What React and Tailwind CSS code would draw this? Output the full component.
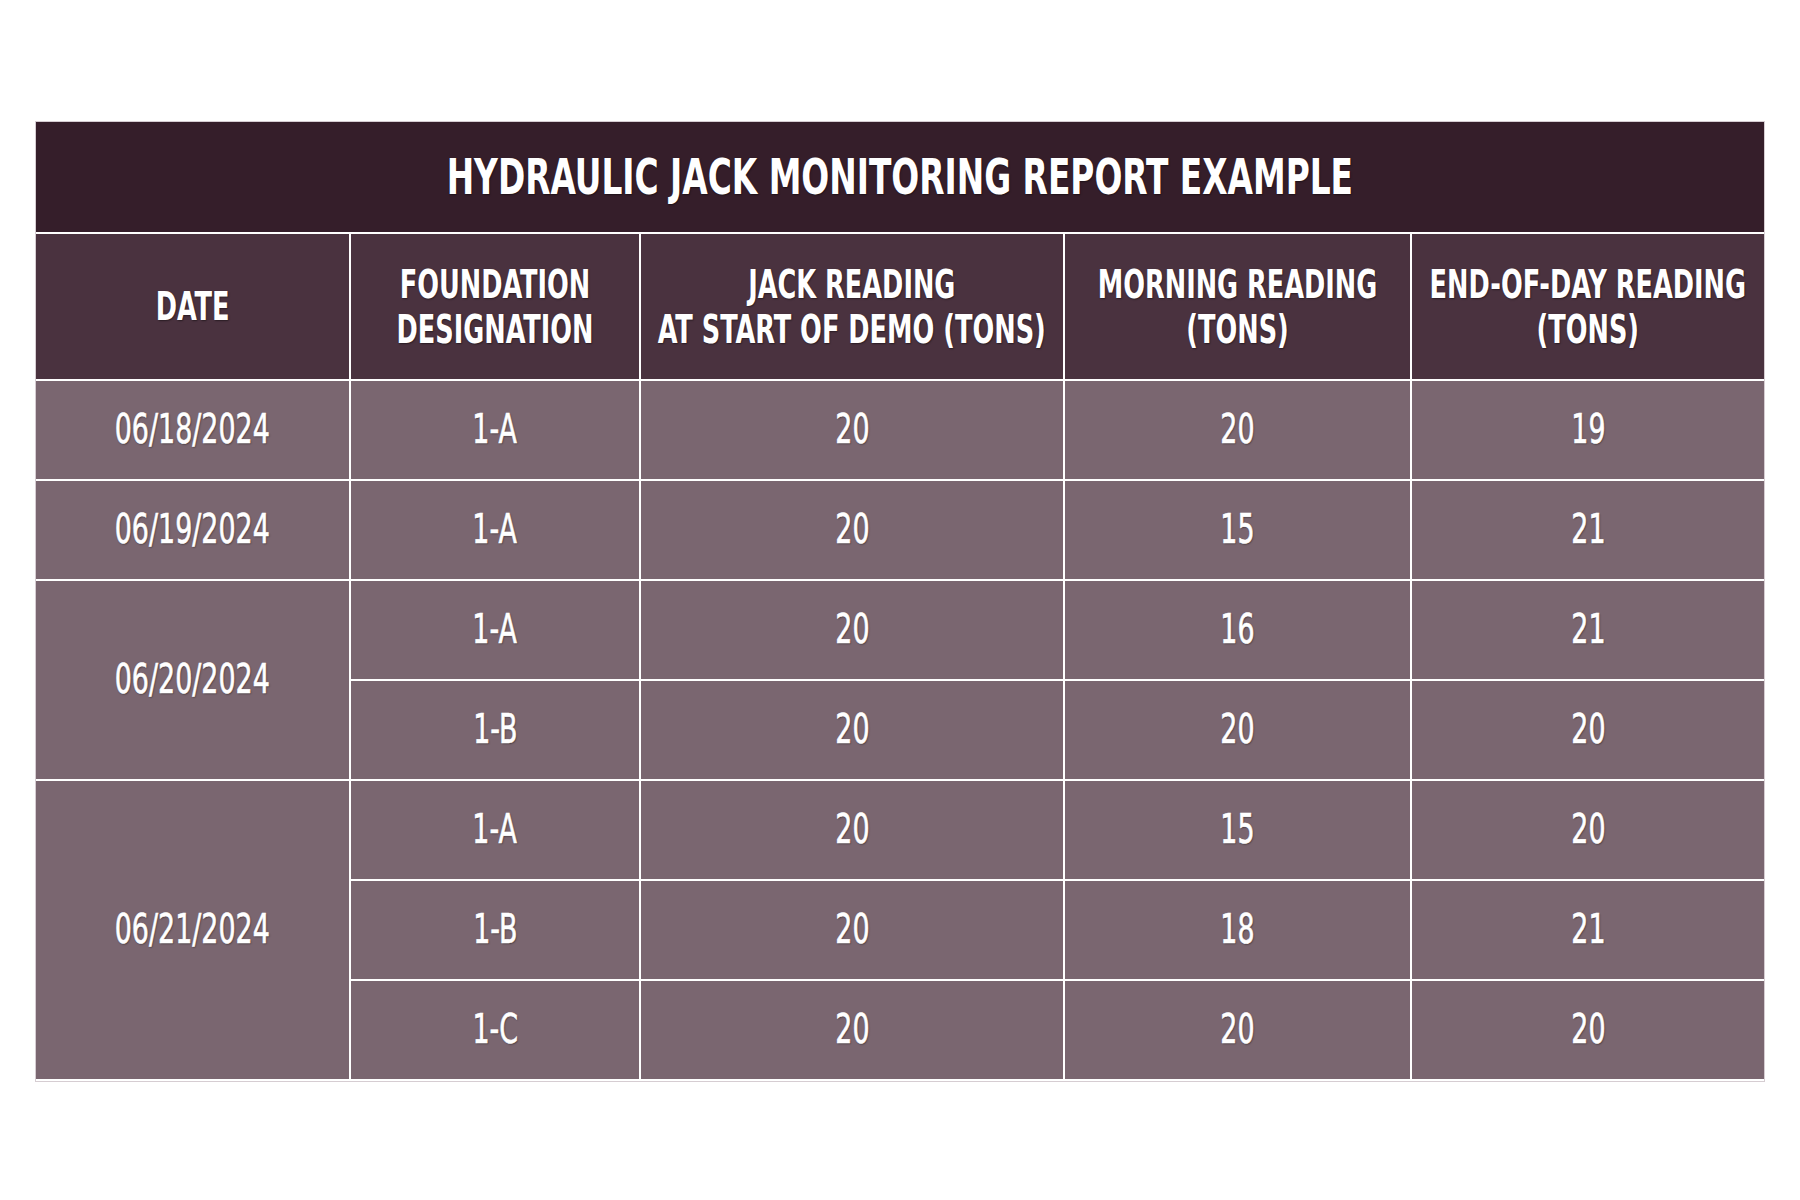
import React from "react";

const font = "font-['Liberation_Sans_Narrow','DejaVu_Sans_Condensed','Roboto',sans-serif]";

const rows = [
  { date: "06/18/2024", span: 1, items: [["1-A", "20", "20", "19"]] },
  { date: "06/19/2024", span: 1, items: [["1-A", "20", "15", "21"]] },
  {
    date: "06/20/2024",
    span: 2,
    items: [
      ["1-A", "20", "16", "21"],
      ["1-B", "20", "20", "20"],
    ],
  },
  {
    date: "06/21/2024",
    span: 3,
    items: [
      ["1-A", "20", "15", "20"],
      ["1-B", "20", "18", "21"],
      ["1-C", "20", "20", "20"],
    ],
  },
];

// condensed look: squeeze the text, keep it centred even when it is wider than the cell
const Txt = ({ children }) => (
  <div className="flex justify-center">
    <span className="inline-block shrink-0 whitespace-nowrap scale-x-[0.73] [text-shadow:1px_1px_2px_rgba(0,0,0,0.45)]">
      {children}
    </span>
  </div>
);

const App = () => {
  return (
    <div className={`w-[1800px] h-[1200px] bg-white pt-[122px] pl-[36px] ${font}`}>
      <table className="table-fixed border-collapse w-[1728px] text-white font-bold text-center outline outline-1 outline-[#d6cdd2]">
        <colgroup>
          <col className="w-[314px]" />
          <col className="w-[290px]" />
          <col className="w-[424px]" />
          <col className="w-[347px]" />
          <col className="w-[353px]" />
        </colgroup>
        <thead>
          <tr className="h-[111px] bg-[#351e2a]">
            <th colSpan={5} className="border-b-2 border-white text-[50px] font-bold">
              <Txt>HYDRAULIC JACK MONITORING REPORT EXAMPLE</Txt>
            </th>
          </tr>
          <tr className="h-[147px] bg-[#4a323f] text-[39px] leading-[45px]">
            <th className="border-2 border-l-0 border-white font-bold">
              <Txt>DATE</Txt>
            </th>
            <th className="border-2 border-white font-bold">
              <Txt>
                FOUNDATION
                <br />
                DESIGNATION
              </Txt>
            </th>
            <th className="border-2 border-white font-bold">
              <Txt>
                JACK READING
                <br />
                AT START OF DEMO (TONS)
              </Txt>
            </th>
            <th className="border-2 border-white font-bold">
              <Txt>
                MORNING READING
                <br />
                (TONS)
              </Txt>
            </th>
            <th className="border-2 border-r-0 border-white font-bold">
              <Txt>
                END-OF-DAY READING
                <br />
                (TONS)
              </Txt>
            </th>
          </tr>
        </thead>
        <tbody className="bg-[#7a6670] text-[41px] font-normal [-webkit-text-stroke:0.6px_white]">
          {rows.map((group) =>
            group.items.map((item, i) => (
              <tr key={group.date + i} className="h-[100px]">
                {i === 0 && (
                  <td
                    rowSpan={group.span}
                    className="border-2 border-l-0 border-white"
                  >
                    <Txt>{group.date}</Txt>
                  </td>
                )}
                {item.map((v, j) => (
                  <td
                    key={j}
                    className={`border-2 border-white ${j === 3 ? "border-r-0" : ""}`}
                  >
                    <Txt>{v}</Txt>
                  </td>
                ))}
              </tr>
            ))
          )}
        </tbody>
      </table>
    </div>
  );
};

export default App;
